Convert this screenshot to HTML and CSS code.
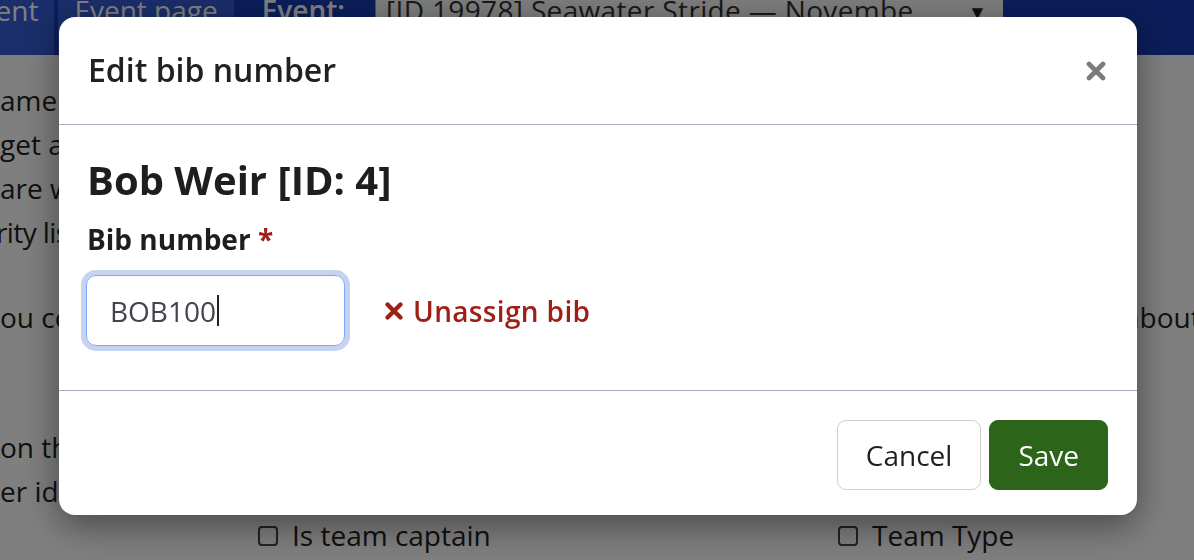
FILE: index.html
```html
<!DOCTYPE html>
<html lang="en">
<head>
<meta charset="utf-8">
<title>Edit bib number</title>
<link rel="stylesheet" href="styles.css">
</head>
<body>
<div class="page">
  <nav class="navbar">
    <a class="nav-link">Event</a>
    <a class="nav-link">Event page</a>
    <span class="nav-label">Event:</span>
    <div class="nav-select">
      <span class="nav-select-text">[ID 19978] Seawater Stride — November 2024 Half Marathon</span>
      <span class="nav-select-arrow">▼</span>
    </div>
  </nav>
  <main class="content">
    <p class="para">
      <span class="line">ame of the participant as it will be shown</span>
      <span class="line">get a bib number assigned before the start</span>
      <span class="line">are working with a timing partner, bib</span>
      <span class="line shift">rity list will be sent to the timing team</span>
    </p>
    <p class="para para-2">
      <span class="line split"><span>ou could change this later if needed</span><span class="right">about the event</span></span>
    </p>
    <p class="para para-3">
      <span class="line">on the participant page you can see</span>
      <span class="line">er identifiers for this registration</span>
    </p>
    <div class="check-row">
      <label class="check"><input type="checkbox" class="box"> Is team captain</label>
      <label class="check"><input type="checkbox" class="box"> Team Type</label>
    </div>
  </main>
</div>

<div class="backdrop"></div>

<div class="modal" role="dialog" aria-labelledby="modal-title">
  <div class="modal-header">
    <h5 class="modal-title" id="modal-title">Edit bib number</h5>
    <button class="btn-close" aria-label="Close">
      <svg width="20" height="20" viewBox="0 0 20 20"><path d="M3 3 L17 17 M17 3 L3 17" stroke="#7b7b7b" stroke-width="4.6" stroke-linecap="round"/></svg>
    </button>
  </div>
  <div class="modal-body">
    <h2 class="participant">Bob Weir [ID: 4]</h2>
    <label class="form-label">Bib number <span class="req">*</span></label>
    <div class="bib-row">
      <div class="bib-input" role="textbox">BOB100<span class="caret"></span></div>
      <a class="unassign" href="#">
        <svg width="20" height="20" viewBox="0 0 20 20"><path d="M3.5 3.5 L16.5 16.5 M16.5 3.5 L3.5 16.5" stroke="#9e1f16" stroke-width="4.4" stroke-linecap="round"/></svg>
        <span>Unassign bib</span>
      </a>
    </div>
  </div>
  <div class="modal-footer">
    <button class="btn btn-cancel">Cancel</button>
    <button class="btn btn-save">Save</button>
  </div>
</div>
</body>
</html>
```

FILE: styles.css
```css
* { box-sizing: border-box; }

html, body {
  margin: 0;
  padding: 0;
  width: 1194px;
  height: 560px;
  overflow: hidden;
}

body {
  font-family: "Open Sans", "Noto Sans", sans-serif;
  font-size: 28px;
  color: #222;
  background: #fff;
}

.page {
  width: 1194px;
  height: 560px;
  overflow: hidden;
}

/* ---------- navbar ---------- */
.navbar {
  display: flex;
  align-items: flex-start;
  height: 55px;
  background: #163cb4;
  margin-left: -50px;
  overflow: hidden;
  white-space: nowrap;
}

.nav-link {
  display: block;
  height: 55px;
  padding: 0 16px;
  margin-right: 4px;
  line-height: 20px;
  color: #fff;
  background: #345cd6;
  text-decoration: none;
}

.nav-label {
  margin-left: 24px;
  margin-right: 30px;
  line-height: 20px;
  font-weight: 600;
  color: #fff;
}

.nav-select {
  display: flex;
  align-items: flex-start;
  width: 628px;
  height: 46px;
  padding-left: 10px;
  background: #fafafa;
  border-left: 1px solid #a0a0a0;
  color: #333;
  line-height: 20px;
}

.nav-select-text {
  width: 526px;
  overflow: hidden;
  letter-spacing: 0.35px;
}

.nav-select-arrow {
  margin-left: 56px;
  font-size: 19px;
  line-height: 24px;
  color: #222;
}

/* ---------- page content ---------- */
.content {
  padding-top: 23px;
}

.para {
  margin: 0;
  line-height: 44px;
}

.line {
  display: block;
  white-space: nowrap;
  overflow: hidden;
}

.shift {
  margin-left: -4px;
  letter-spacing: -0.6px;
}

.split {
  display: grid;
  grid-template-columns: 1124px auto;
}

.para-2 { margin-top: 41px; }
.para-3 { margin-top: 86px; }

.check-row {
  display: grid;
  grid-template-columns: 580px auto;
  padding-left: 258px;
  line-height: 44px;
}

.check {
  display: flex;
  align-items: center;
  gap: 14px;
}

.box {
  appearance: none;
  -webkit-appearance: none;
  width: 20px;
  height: 20px;
  margin: 0;
  border: 2px solid #444;
  border-radius: 4px;
  background: #fff;
  position: relative;
  top: 1px;
}

/* ---------- modal ---------- */
.backdrop {
  position: fixed;
  inset: 0;
  background: rgba(0, 0, 0, 0.5);
}

.modal {
  position: fixed;
  left: 59px;
  top: 17px;
  width: 1078px;
  background: #fff;
  border-radius: 16px;
  box-shadow: 0 10px 36px rgba(0, 0, 0, 0.45);
}

.modal-header {
  display: flex;
  align-items: center;
  justify-content: space-between;
  height: 108px;
  padding: 0 31px 0 29px;
  border-bottom: 1px solid #aaa8ba;
}

.modal-title {
  margin: 0;
  font-size: 32px;
  font-weight: 600;
  line-height: 1.2;
  color: #212121;
}

.btn-close {
  display: flex;
  padding: 0;
  border: 0;
  background: none;
}

.modal-body {
  padding: 31px 28px 44px;
  border-bottom: 1px solid #aaa8ba;
}

.participant {
  margin: 0;
  font-size: 40px;
  font-weight: 700;
  line-height: 48px;
  color: #1e1e1e;
}

.form-label {
  display: block;
  margin-top: 14px;
  font-weight: 700;
  line-height: 42px;
  color: #1e1e1e;
}

.req {
  color: #9e1f16;
}

.bib-row {
  display: flex;
  align-items: center;
  gap: 39px;
  margin-top: 15px;
}

.bib-input {
  display: flex;
  align-items: center;
  width: 259px;
  height: 71px;
  margin-left: -1px;
  padding-left: 23px;
  border: 1px solid #7fa6f7;
  border-radius: 10px;
  box-shadow: 0 0 0 5px #c5d2f0;
  color: #44444e;
  line-height: 42px;
}

.caret {
  display: inline-block;
  width: 2px;
  height: 31px;
  margin-left: 1px;
  background: #222;
}

.unassign {
  display: flex;
  align-items: center;
  gap: 9px;
  color: #9e1f16;
  font-weight: 600;
  letter-spacing: 0.35px;
  text-decoration: none;
  line-height: 42px;
}

.modal-footer {
  display: flex;
  justify-content: flex-end;
  gap: 8px;
  padding: 29px 29px 25px;
}

.btn {
  height: 70px;
  padding: 0 28px;
  font-family: inherit;
  font-size: 28px;
  line-height: 42px;
  border-radius: 9px;
  cursor: pointer;
}

.btn-cancel {
  background: #fff;
  color: #1f1f1f;
  border: 1px solid #cfcfcf;
}

.btn-save {
  background: #2c641a;
  color: #fff;
  border: 1px solid #2c641a;
}
```
